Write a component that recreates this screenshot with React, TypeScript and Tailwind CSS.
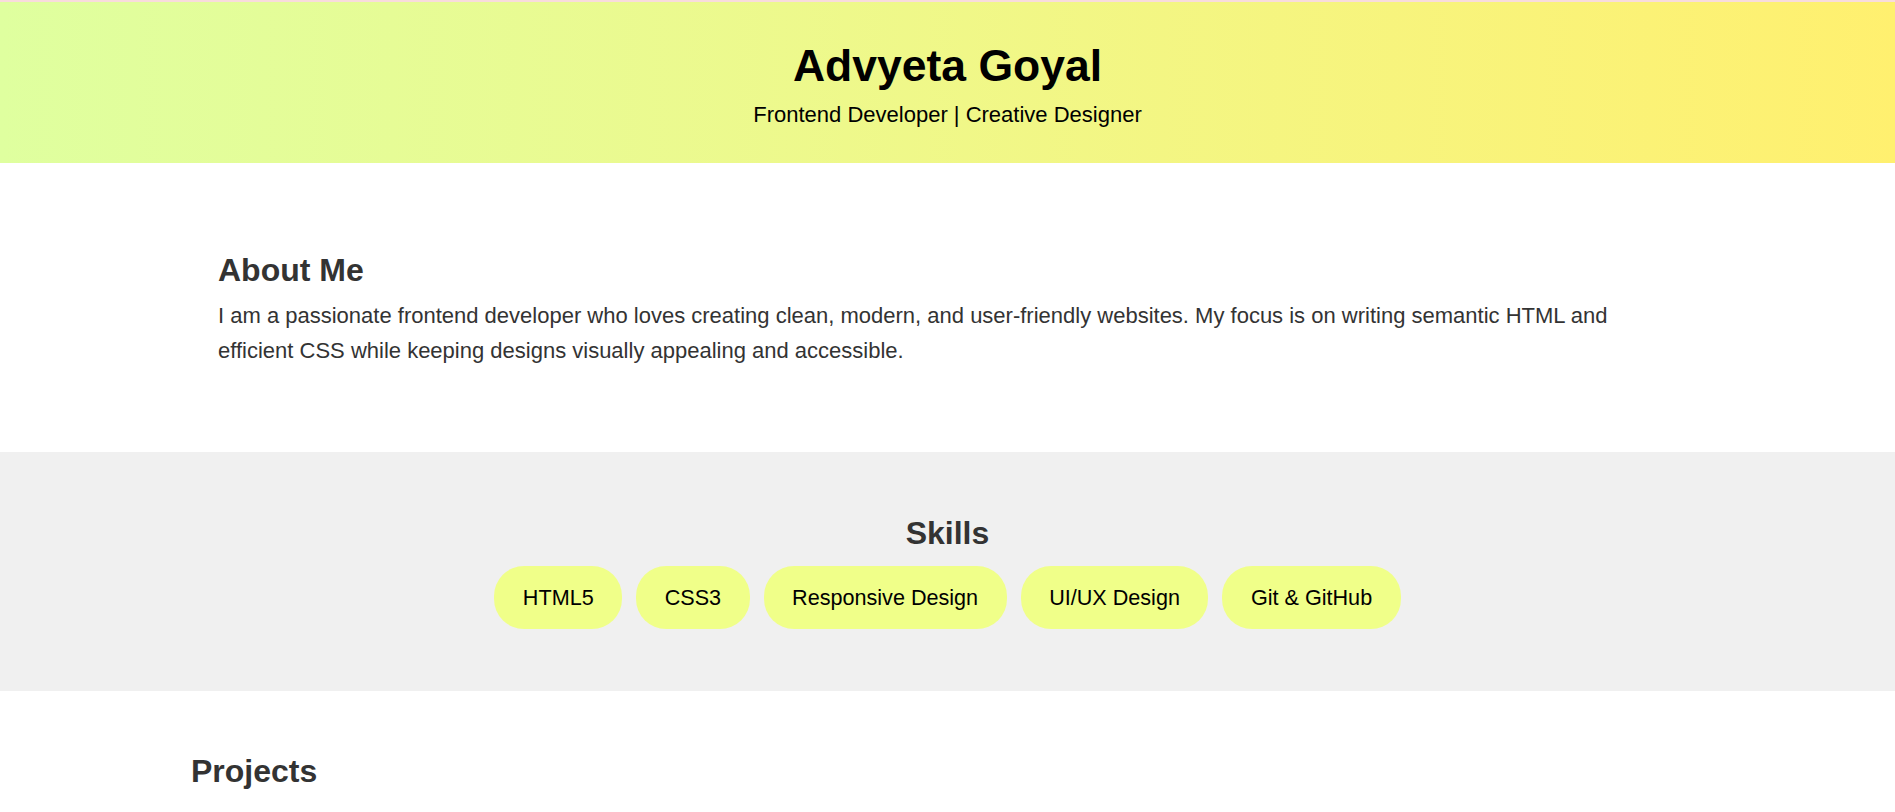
const skills = ["HTML5", "CSS3", "Responsive Design", "UI/UX Design", "Git & GitHub"];

export default function App() {
	return (
		<div className="min-h-screen bg-white font-['Liberation_Sans',Arial,sans-serif] text-[#333]">
			<div className="h-[2px] bg-[#f8dcdc]" />
			<header className="bg-gradient-to-r from-[#dfff9f] to-[#fff06f] pt-[39px] pb-[35px] text-center text-black">
				<h1 className="text-[44.5px] leading-[50px] font-bold">Advyeta Goyal</h1>
				<p className="mt-[11px] text-[22px] leading-[26px]">Frontend Developer | Creative Designer</p>
			</header>

			{/* About */}
			<section className="px-[218px] pt-[89px] pb-[84px]">
				<h2 className="text-[32px] leading-[37px] font-bold">About Me</h2>
				<p className="mt-[9px] text-[22px] leading-[35px]">
					I am a passionate frontend developer who loves creating clean, modern, and user-friendly websites. My focus is
					on writing semantic HTML and efficient CSS while keeping designs visually appealing and accessible.
				</p>
			</section>

			{/* Skills */}
			<section className="bg-[#f0f0f0] pt-[63px] pb-[62px] text-center">
				<h2 className="text-[32px] leading-[37px] font-bold">Skills</h2>
				<ul className="mt-[14px] flex flex-wrap justify-center gap-[14px]">
					{skills.map((skill) => (
						<li
							key={skill}
							className="rounded-[30px] bg-[#f0ff89] px-[28.5px] py-[14px] text-[21.6px] leading-[35px] text-black"
						>
							{skill}
						</li>
					))}
				</ul>
			</section>

			{/* Projects */}
			<section className="px-[191px] pt-[62px] pb-[60px]">
				<h2 className="text-[32px] leading-[37px] font-bold">Projects</h2>
			</section>
		</div>
	);
}
